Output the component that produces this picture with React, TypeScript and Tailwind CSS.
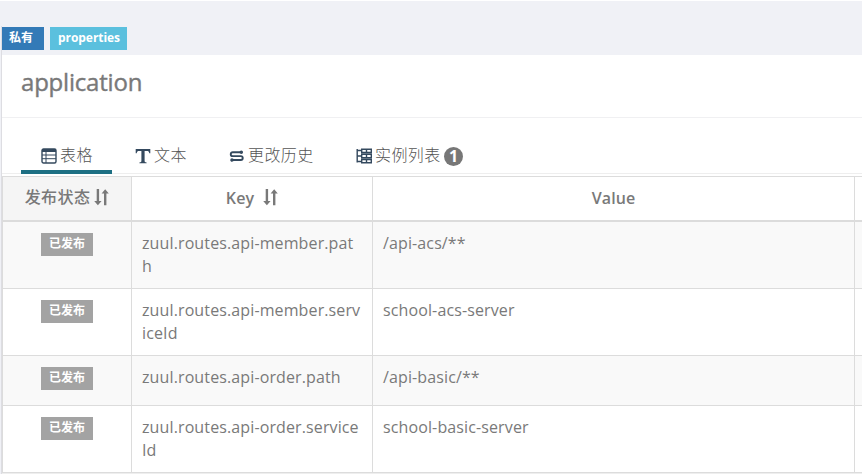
import type { ReactNode } from "react";

const rows = [
  { k: "zuul.routes.api-member.path", v: "/api-acs/**", box: "h-[67px] bg-[#f9f9f9]" },
  { k: "zuul.routes.api-member.serviceId", v: "school-acs-server", box: "h-[67px] bg-white" },
  { k: "zuul.routes.api-order.path", v: "/api-basic/**", box: "h-[50px] bg-[#f9f9f9]" },
  { k: "zuul.routes.api-order.serviceId", v: "school-basic-server", box: "h-[67px] bg-white" },
];

function SortIcon() {
  return (
    <svg width="15" height="17" viewBox="0 0 15 17" fill="#797979" className="shrink-0">
      <path d="M2.7 0h2.4v12h2.5L3.9 16.3.2 12h2.5zM10 16.3h2.4V4.6h2.4L11.2.2 7.6 4.6H10z" />
    </svg>
  );
}

function TableIcon() {
  return (
    <svg width="16" height="16" viewBox="0 0 16 16" fill="none" stroke="#34495e" className="shrink-0">
      <rect x="1" y="1" width="14" height="14" rx="1.5" strokeWidth="1.4" />
      <path d="M1 2.5h14" strokeWidth="3" />
      <path d="M1 7h14M1 10.7h14M5 3v12" strokeWidth="1" />
    </svg>
  );
}

function TextIcon() {
  return (
    <svg width="16" height="16" viewBox="0 0 16 16" fill="#34495e" className="shrink-0">
      <path d="M.7 1h14.6v4.2h-1c-.3-1.7-.8-2.3-2.3-2.3H9.6v10.2c0 .9.4 1.2 2 1.300v.8H4.4v-.8c1.6-.1 2-.4 2-1.300V2.900H4c-1.500 0-2 .6-2.300 2.300h-1z" />
    </svg>
  );
}

function HistoryIcon() {
  return (
    <svg width="16" height="16" viewBox="0 0 16 16" fill="none" stroke="#34495e" strokeWidth="1.900" className="shrink-0">
      <path d="M11 4.200H3.700a1.950 1.950 0 0 0 0 3.900H11.800a1.950 1.950 0 0 1 0 3.900H4" />
      <circle cx="12.300" cy="4.200" r=".8" />
      <circle cx="3" cy="12" r=".8" />
    </svg>
  );
}

function InstanceIcon() {
  return (
    <svg width="16" height="16" viewBox="0 0 16 16" fill="none" stroke="#34495e" className="shrink-0">
      <path d="M1.200 1v13.500M1 2.500h5M1 8h5M1 13.500h5" strokeWidth="1.400" />
      <path d="M5.700 1.200h9.600v3.300H5.700zM5.700 6.300h9.600v3.400H5.700zM5.700 11.500h9.600v3.300H5.700z" strokeWidth="1.400" />
      <path d="M10.500 1v4M10.500 6v4M10.500 11v4" strokeWidth="1.400" />
    </svg>
  );
}

function Tab({ icon, children, box }: { icon: ReactNode; children: ReactNode; box: string }) {
  return (
    <div className={`flex shrink-0 items-start pl-[20px] pt-[24px] ${box}`}>
      {icon}
      <span className="-mt-[4px] ml-[3px] whitespace-nowrap text-[16px] font-light leading-[23px] tracking-[0.4px] text-[#555]">{children}</span>
    </div>
  );
}

export default function App() {
  return (
    <div className="flex h-[474px] w-[862px] flex-col overflow-hidden border-t border-white bg-[#f0f1f6] font-['Open_Sans','Noto_Sans_CJK_SC',sans-serif] text-[#797979]">
      <div className="h-[25px] shrink-0" />
      <div className="ml-px flex grow flex-col border-l border-[#dddde2]">
        <div className="flex h-[29px] shrink-0 gap-[6px] pt-px text-[12px] font-bold leading-[22px] text-white">
          <span className="h-[23px] w-[42px] bg-[#337ab7] pl-[7px]">私有</span>
          <span className="h-[23px] w-[77px] bg-[#5bc0de] pl-px text-center tracking-[-0.05px]">properties</span>
        </div>
        <div className="h-[63px] shrink-0 border-b border-[#f0f0f2] bg-white pl-[19px] pt-[10px] text-[24px] font-medium leading-[34px] tracking-[-0.2px] [-webkit-text-stroke:0.4px_#797979]">application</div>
        <div className="flex h-[56px] shrink-0 items-end border-b border-[#eeeeee] bg-white pl-[19px]">
          <Tab icon={<TableIcon />} box="-mb-px h-[50px] w-[91px] border-b-4 border-[#1d6f83]">表格</Tab>
          <Tab icon={<TextIcon />} box="ml-[3px] h-[49px] w-[94px]">文本</Tab>
          <Tab icon={<HistoryIcon />} box="h-[49px] w-[127px]">更改历史</Tab>
          <Tab icon={<InstanceIcon />} box="h-[49px] w-[108px]">实例列表</Tab>
          <span className="mb-[7px] size-[19px] shrink-0 rounded-full bg-[#777] text-center text-[16px] font-bold leading-[18px] text-white">1</span>
        </div>
        <div className="h-[2px] shrink-0 bg-white" />
        <div className="flex shrink-0 flex-col border-l border-t border-[#dcdcdc] bg-white text-[16px] tracking-[0.12px]">
          <div className="flex h-[45px] border-b-2 border-[#dcdcdc] font-semibold leading-[42px]">
            <div className="flex w-[129px] shrink-0 items-center justify-center gap-[4px] border-r border-[#dcdcdc] bg-[#f5f5f5] pb-[3px] font-medium tracking-[0.4px]">发布状态<SortIcon /></div>
            <div className="flex w-[241px] shrink-0 items-center justify-center gap-[9px] border-r border-[#dcdcdc] pb-[2px]">Key<SortIcon /></div>
            <div className="w-[482px] shrink-0 border-r border-[#dcdcdc] text-center">Value</div>
          </div>
          {rows.map((r) => (
            <div key={r.k} className={`flex border-b border-[#dcdcdc] leading-[23px] ${r.box}`}>
              <div className="flex w-[129px] shrink-0 justify-center border-r border-[#dcdcdc] pt-[11px]">
                <span className="h-[23px] w-[52px] bg-[#a3a3a3] text-center text-[12px] font-bold leading-[21px] tracking-normal text-white">已发布</span>
              </div>
              <div className="w-[241px] shrink-0 break-all border-r border-[#dcdcdc] px-[10px] pt-[10px]">{r.k}</div>
              <div className="w-[482px] shrink-0 border-r border-[#dcdcdc] px-[10px] pt-[10px]">{r.v}</div>
            </div>
          ))}
        </div>
        <div className="h-px shrink-0 bg-[#eeeeee]" />
      </div>
    </div>
  );
}
